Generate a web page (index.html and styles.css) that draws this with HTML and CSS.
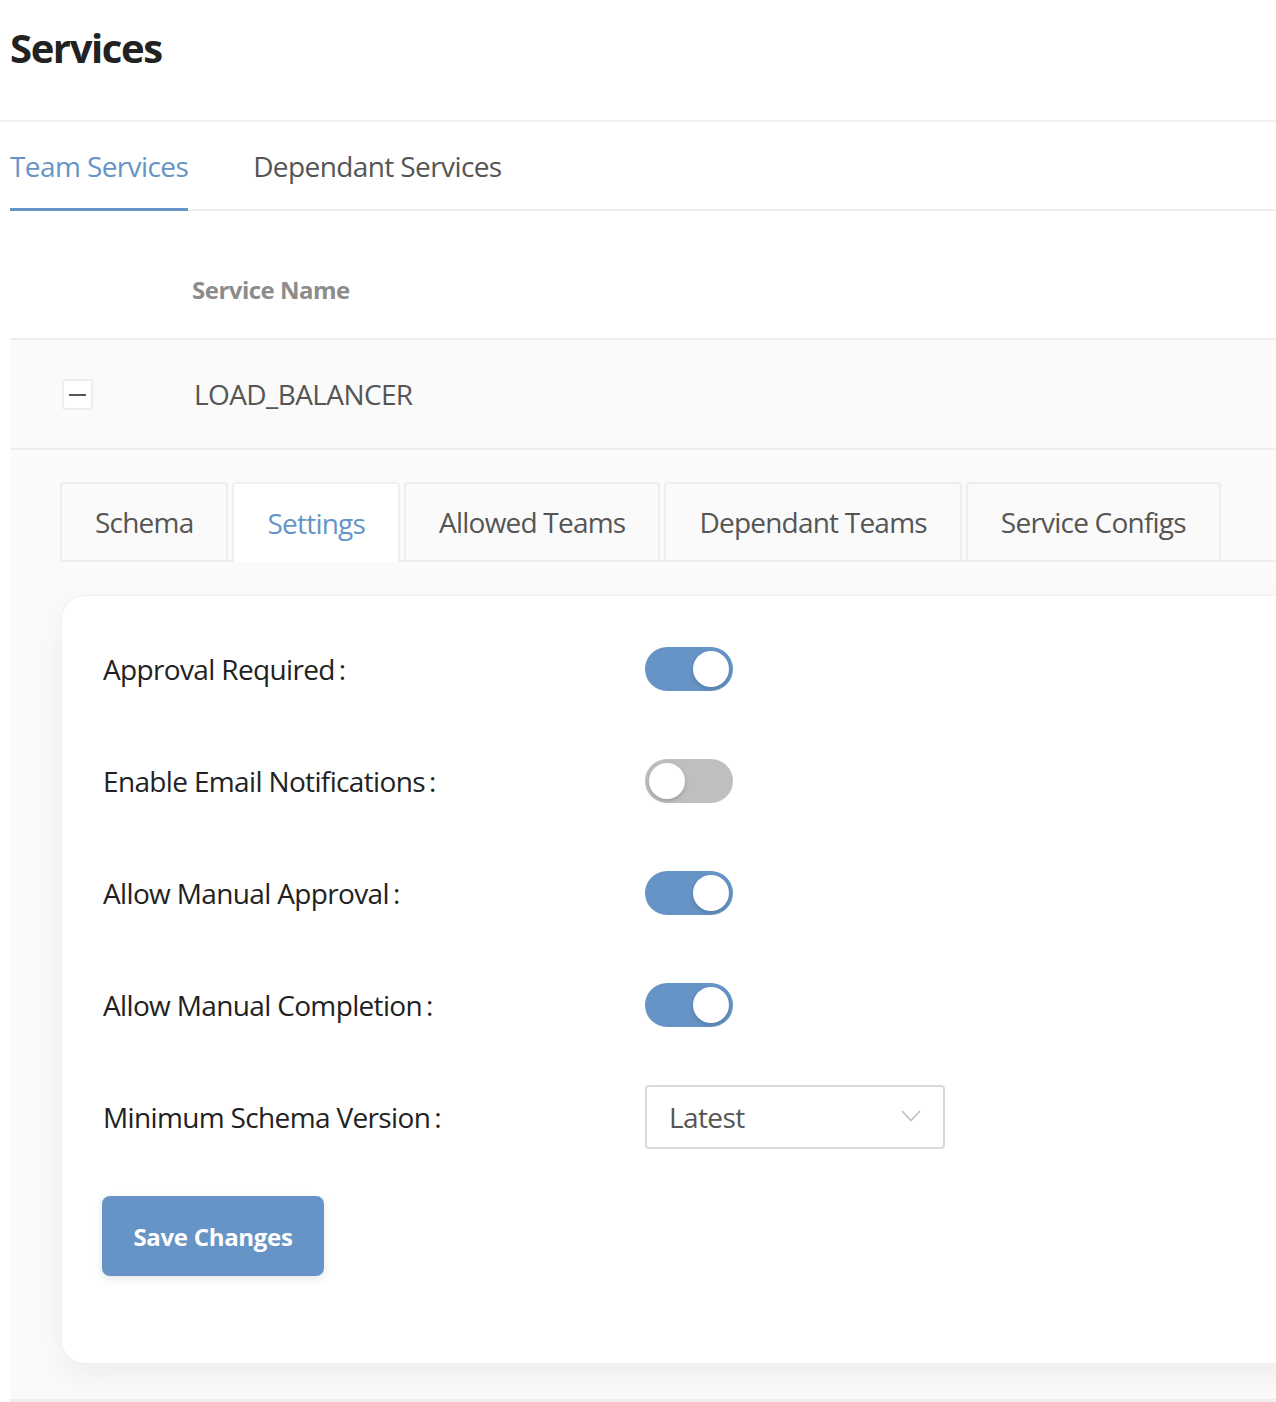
FILE: index.html
```html
<!DOCTYPE html>
<html lang="en">
<head>
<meta charset="utf-8">
<title>Services</title>
<link rel="stylesheet" href="styles.css">
</head>
<body>
<div class="page">
  <header class="page-header">
    <h1 class="page-title">Services</h1>
  </header>
  <div class="content">
    <nav class="main-tabs">
      <a class="main-tab active">Team Services</a>
      <a class="main-tab">Dependant Services</a>
    </nav>
    <div class="table">
      <div class="thead">
        <div class="col-expand"></div>
        <div class="th">Service Name</div>
      </div>
      <div class="trow">
        <div class="col-expand"><span class="expand-btn"></span></div>
        <div class="td">LOAD_BALANCER</div>
      </div>
      <div class="expanded">
        <div class="inner-tabs">
          <div class="inner-tab">Schema</div>
          <div class="inner-tab active">Settings</div>
          <div class="inner-tab">Allowed Teams</div>
          <div class="inner-tab">Dependant Teams</div>
          <div class="inner-tab">Service Configs</div>
        </div>
        <div class="card">
          <div class="form">
            <div class="form-row">
              <div class="label">Approval Required<span class="colon">:</span></div>
              <div class="control"><span class="switch on"><span class="knob"></span></span></div>
            </div>
            <div class="form-row">
              <div class="label">Enable Email Notifications<span class="colon">:</span></div>
              <div class="control"><span class="switch"><span class="knob"></span></span></div>
            </div>
            <div class="form-row">
              <div class="label">Allow Manual Approval<span class="colon">:</span></div>
              <div class="control"><span class="switch on"><span class="knob"></span></span></div>
            </div>
            <div class="form-row">
              <div class="label">Allow Manual Completion<span class="colon">:</span></div>
              <div class="control"><span class="switch on"><span class="knob"></span></span></div>
            </div>
            <div class="form-row">
              <div class="label">Minimum Schema Version<span class="colon">:</span></div>
              <div class="control">
                <div class="select">
                  <span class="select-value">Latest</span>
                  <svg class="chevron" width="20" height="12" viewBox="0 0 20 12"><path d="M1 1 L10 10.5 L19 1" fill="none" stroke="#bfbfbf" stroke-width="1.6"/></svg>
                </div>
              </div>
            </div>
          </div>
          <button class="btn-primary">Save Changes</button>
        </div>
      </div>
    </div>
  </div>
</div>
</body>
</html>
```
FILE: styles.css
```css
html { overflow-x: hidden; }
body {
  margin: 0;
  background: #fff;
  font-family: "Open Sans", "Noto Sans", sans-serif;
  color: #222;
}
.page { width: 1340px; }

.page-header {
  height: 120px;
  border-bottom: 2px solid #f0f0f0;
  padding-left: 10px;
}
.page-title {
  margin: 0;
  padding-top: 24px;
  font-size: 40px;
  line-height: 48px;
  font-weight: 700;
  letter-spacing: -1.4px;
  color: #222;
}

.content { padding-left: 10px; }

.main-tabs {
  display: flex;
  border-bottom: 2px solid #eee;
}
.main-tab {
  padding: 26px 0 24px;
  margin-right: 65px;
  margin-bottom: -2px;
  font-size: 28px;
  line-height: 36px;
  letter-spacing: -0.6px;
  color: #555;
  border-bottom: 3px solid transparent;
}
.main-tab.active {
  color: #6694c6;
  border-bottom-color: #6694c6;
}

.thead, .trow { display: flex; align-items: center; }
.col-expand { width: 182px; flex: none; padding-left: 52px; box-sizing: border-box; }
.thead {
  height: 127px;
  border-bottom: 2px solid #eee;
  align-items: flex-start;
}
.th {
  padding-top: 64px;
  font-size: 24px;
  line-height: 30px;
  font-weight: 700;
  letter-spacing: -0.5px;
  color: #8c8c8c;
}
.trow {
  height: 108px;
  background: #fafafa;
  border-bottom: 2px solid #eee;
}
.td {
  font-size: 28px;
  line-height: 36px;
  letter-spacing: -0.6px;
  color: #555;
  padding-left: 2px;
}
.expand-btn {
  display: block;
  position: relative;
  width: 31px;
  height: 31px;
  box-sizing: border-box;
  border: 2px solid #eee;
  border-radius: 3px;
  background: #fff;
}
.expand-btn::before {
  content: "";
  position: absolute;
  left: 5px;
  right: 5px;
  top: 13px;
  height: 2px;
  background: #555;
}

.expanded {
  background: #fafafa;
  padding: 32px 0 35px 50px;
  border-bottom: 3px solid #eee;
}
.inner-tabs {
  display: flex;
  gap: 4px;
  border-bottom: 2px solid #eee;
}
.inner-tab {
  height: 78px;
  box-sizing: border-box;
  padding: 0 33px;
  display: flex;
  align-items: center;
  border: 2px solid #eee;
  border-bottom: none;
  border-radius: 4px 4px 0 0;
  margin-bottom: -2px;
  background: #fafafa;
  font-size: 28px;
  letter-spacing: -0.78px;
  color: #555;
}
.inner-tab.active {
  background: #fff;
  color: #6694c6;
  border-color: #f0f0f0;
  height: 80px;
}

.card {
  margin-top: 33px;
  margin-left: 1px;
  background: #fff;
  border: 1px solid #f0f0f0;
  border-radius: 24px;
  padding: 41px 0 87px 41px;
  box-shadow: 0 12px 30px rgba(0, 0, 0, 0.05);
}
.form {
  display: flex;
  flex-direction: column;
  gap: 48px;
}
.form-row {
  display: flex;
  align-items: center;
  height: 64px;
}
.label {
  width: 542px;
  flex: none;
  font-size: 28px;
  letter-spacing: -0.65px;
  color: #222;
}
.colon { margin-left: 4px; }

.switch {
  display: block;
  position: relative;
  width: 88px;
  height: 44px;
  border-radius: 22px;
  background: #bfbfbf;
}
.switch.on { background: #6694c6; }
.knob {
  position: absolute;
  top: 4px;
  left: 4px;
  width: 36px;
  height: 36px;
  border-radius: 50%;
  background: #fff;
  box-shadow: 0 2px 4px rgba(0, 35, 11, 0.2);
}
.switch.on .knob { left: 48px; }

.select {
  width: 300px;
  height: 64px;
  box-sizing: border-box;
  border: 2px solid #d9d9d9;
  border-radius: 4px;
  display: flex;
  align-items: center;
  justify-content: space-between;
  padding: 0 22px 0 22px;
  background: #fff;
}
.select-value {
  font-size: 28px;
  letter-spacing: -0.6px;
  color: #555;
}
.chevron { display: block; margin-top: -2px; }

.btn-primary {
  margin-top: 47px;
  margin-left: -1px;
  width: 222px;
  height: 80px;
  border: none;
  border-radius: 8px;
  background: #6694c6;
  color: #fff;
  font-family: "Open Sans", "Noto Sans", sans-serif;
  font-size: 24px;
  font-weight: 700;
  letter-spacing: -0.3px;
  box-shadow: 0 3px 8px rgba(0, 0, 0, 0.1);
  padding: 0;
}
```
